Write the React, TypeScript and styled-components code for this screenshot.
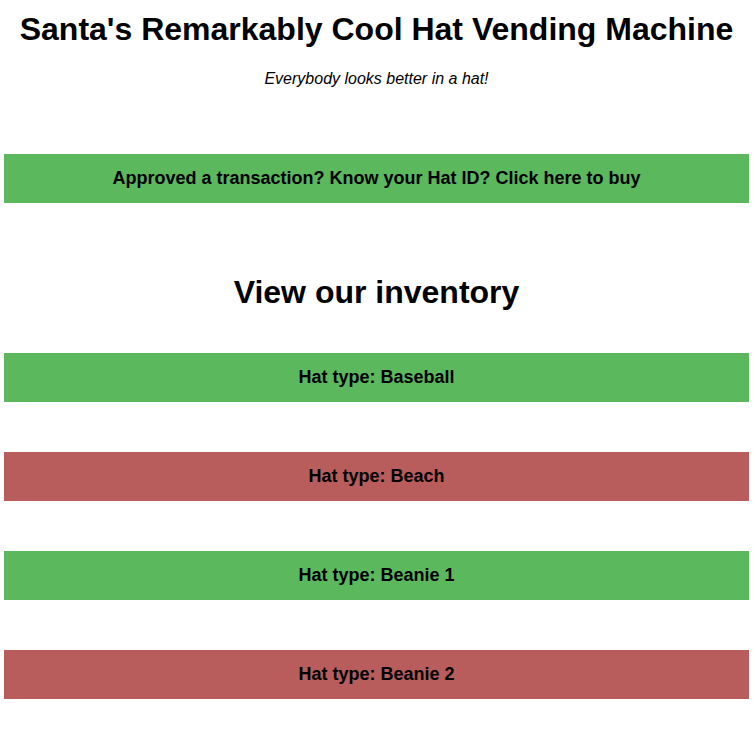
import React from "react";
import styled, { createGlobalStyle } from "styled-components";

const GlobalStyle = createGlobalStyle`
  html, body { margin: 0; padding: 0; background: #ffffff; }
  body { font-family: "Liberation Sans", Arial, sans-serif; color: #000; }
`;

const Page = styled.div`
  display: flex;
  flex-direction: column;
  align-items: stretch;
  padding: 11px 5px 35px 4px;
`;

const Title = styled.h1`
  margin: 0;
  font-size: 32px;
  line-height: 37px;
  font-weight: 700;
  text-align: center;
`;

const Subtitle = styled.p`
  margin: 22px 0 0;
  font-size: 16px;
  line-height: 18px;
  font-style: italic;
  text-align: center;
`;

const Heading = styled.h2`
  margin: 71px 0 0;
  font-size: 32px;
  line-height: 37px;
  font-weight: 700;
  text-align: center;
`;

const Bar = styled.div<{ $tone: "green" | "red" }>`
  display: flex;
  justify-content: center;
  align-items: center;
  padding: 14px 0;
  font-size: 18px;
  line-height: 21px;
  font-weight: 700;
  background: ${(p) => (p.$tone === "green" ? "#5cb85c" : "#b85c5c")};
  cursor: pointer;
`;

const BuyBar = styled(Bar)`
  margin-top: 66px;
`;

const List = styled.div`
  display: flex;
  flex-direction: column;
  gap: 50px;
  margin-top: 42px;
`;

const hats: { name: string; available: boolean }[] = [
  { name: "Baseball", available: true },
  { name: "Beach", available: false },
  { name: "Beanie 1", available: true },
  { name: "Beanie 2", available: false },
];

export default function App() {
  return (
    <>
      <GlobalStyle />
      <Page>
        <Title>Santa's Remarkably Cool Hat Vending Machine</Title>
        <Subtitle>Everybody looks better in a hat!</Subtitle>
        <BuyBar $tone="green">
          Approved a transaction? Know your Hat ID? Click here to buy
        </BuyBar>
        <Heading>View our inventory</Heading>
        <List>
          {hats.map((h) => (
            <Bar key={h.name} $tone={h.available ? "green" : "red"}>
              Hat type: {h.name}
            </Bar>
          ))}
        </List>
      </Page>
    </>
  );
}
